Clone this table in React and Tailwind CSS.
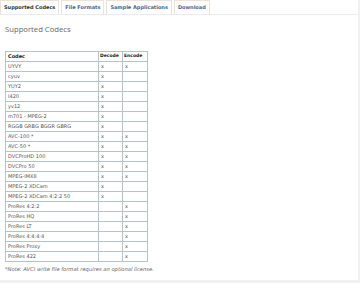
import React from 'react';

const tabs = ['Supported Codecs', 'File Formats', 'Sample Applications', 'Download'];

const codecs = [
  ['UYVY', true, true],
  ['cyuv', true, false],
  ['YUY2', true, false],
  ['I420', true, false],
  ['yv12', true, false],
  ['m701 - MPEG-2', true, false],
  ['RGGB GRBG BGGR GBRG', true, false],
  ['AVC-100 *', true, true],
  ['AVC-50 *', true, true],
  ['DVCProHD 100', true, true],
  ['DVCPro 50', true, true],
  ['MPEG-IMX8', true, true],
  ['MPEG-2 XDCam', true, false],
  ['MPEG-2 XDCam 4:2:2 50', true, false],
  ['ProRes 4:2:2', false, true],
  ['ProRes HQ', false, true],
  ['ProRes LT', false, true],
  ['ProRes 4:4:4:4', false, true],
  ['ProRes Proxy', false, true],
  ['ProRes 422', false, true],
];

const App = () => {
  return (
    <div className="w-[360px] h-[283px] bg-[#f1f1f1] overflow-hidden" style={{ fontFamily: '"DejaVu Sans", Verdana, sans-serif' }}>
      <div className="w-[358px] h-[280px] bg-white flex flex-col">
        {/* Tabs */}
        <div className="flex gap-[2px] h-[15px] border-b border-[#ececec]">
          {tabs.map((t, i) => (
            <div
              key={t}
              className={`h-[15px] flex items-center px-[3px] border border-b-0 border-[#ece4dc] text-[5px] font-bold ${
                i === 0 ? 'text-[#333]' : 'text-[#3d6a94]'
              }`}
            >
              {t}
            </div>
          ))}
        </div>

        <div className="px-[5px]">
          <h1 className="mt-[8px] text-[7.7px] leading-[12px] text-[#666]" style={{ fontFamily: '"Open Sans", sans-serif' }}>
            Supported Codecs
          </h1>

          {/* Codec table */}
          <table className="mt-[16px] border-collapse text-[5px] text-[#555]">
            <thead>
              <tr className="h-[10px]">
                <th className="w-[93px] border border-[#b3c5c9] px-[2px] text-left font-bold text-[#222]">Codec</th>
                <th className="w-[24px] border border-[#b3c5c9] px-[1px] text-left font-bold text-[#222] text-[4.5px]">Decode</th>
                <th className="w-[25px] border border-[#b3c5c9] px-[1px] text-left font-bold text-[#222] text-[4.5px]">Encode</th>
              </tr>
            </thead>
            <tbody>
              {codecs.map(([name, dec, enc]) => (
                <tr key={name} className="h-[10px]">
                  <td className="border border-[#b3c5c9] px-[2px]">{name}</td>
                  <td className="border border-[#b3c5c9] px-[2px]">{dec ? 'x' : ''}</td>
                  <td className="border border-[#b3c5c9] px-[2px]">{enc ? 'x' : ''}</td>
                </tr>
              ))}
            </tbody>
          </table>

          <p className="mt-[4px] text-[5.2px] italic text-[#666]">
            *Note: AVCI write file format requires an optional license.
          </p>
        </div>
      </div>
    </div>
  );
};

export default App;
